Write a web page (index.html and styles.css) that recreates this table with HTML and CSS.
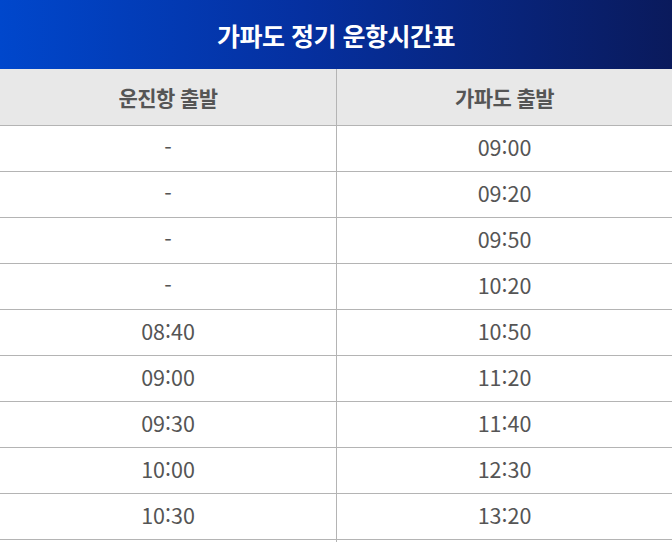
FILE: index.html
```html
<!DOCTYPE html>
<html lang="ko">
<head>
<meta charset="utf-8">
<link rel="stylesheet" href="styles.css">
</head>
<body>
<div class="timetable">
  <div class="title">가파도 정기 운항시간표</div>
  <div class="grid">
    <div class="th">운진항 출발</div><div class="th">가파도 출발</div>
    <div class="td">-</div><div class="td">09:00</div>
    <div class="td">-</div><div class="td">09:20</div>
    <div class="td">-</div><div class="td">09:50</div>
    <div class="td">-</div><div class="td">10:20</div>
    <div class="td">08:40</div><div class="td">10:50</div>
    <div class="td">09:00</div><div class="td">11:20</div>
    <div class="td">09:30</div><div class="td">11:40</div>
    <div class="td">10:00</div><div class="td">12:30</div>
    <div class="td">10:30</div><div class="td">13:20</div>
    <div class="td"></div><div class="td"></div>
  </div>
</div>
</body>
</html>
```
FILE: styles.css
```css
html, body {
  margin: 0;
  padding: 0;
  background: #fff;
}
body {
  font-family: "Noto Sans CJK KR", "Noto Sans", sans-serif;
  width: 672px;
  height: 542px;
  overflow: hidden;
}
.title {
  height: 69px;
  display: flex;
  align-items: center;
  justify-content: center;
  background: linear-gradient(to right, #0047cc 0%, #0530a0 45%, #0a1a5c 100%);
  color: #fff;
  font-size: 25px;
  font-weight: 700;
  letter-spacing: -0.5px;
}
.grid {
  display: grid;
  grid-template-columns: 337px 1fr;
}
.th, .td {
  display: flex;
  align-items: center;
  justify-content: center;
  border-bottom: 1px solid #b4b4b4;
  color: #555;
}
.th:nth-child(odd), .td:nth-child(odd) {
  border-right: 1px solid #b4b4b4;
}
.th {
  height: 56px;
  background: #e8e8e8;
  font-size: 21px;
  font-weight: 700;
  letter-spacing: -0.6px;
}
.td {
  height: 41px;
  padding-bottom: 4px;
  font-size: 21.5px;
  font-weight: 400;
}
```
